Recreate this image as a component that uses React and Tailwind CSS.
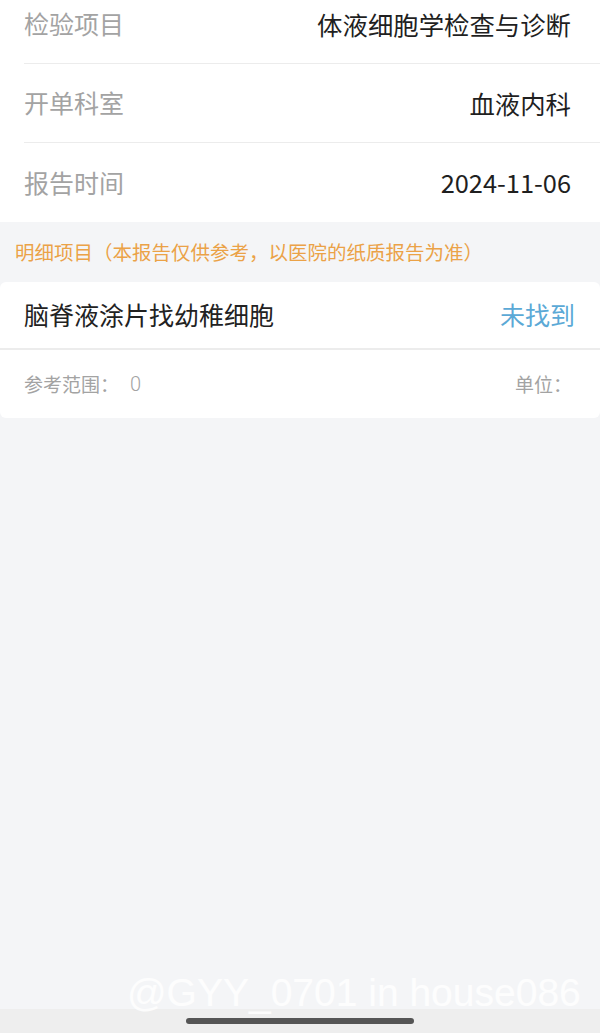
import React from 'react';

const font = { fontFamily: '"Noto Sans CJK SC", "Noto Sans", sans-serif' };

const InfoRow = ({ label, value, last }) => (
  <div className={`flex items-center justify-between h-[79px] ml-6 pr-[29px] ${last ? '' : 'border-b border-[#ececec]'}`}>
    <span className="text-[25px] text-[#a3a3a3]">{label}</span>
    <span className="text-[25.4px] text-[#1f1f1f]">{value}</span>
  </div>
);

const App = () => {
  return (
    <div className="w-[600px] h-[1033px] bg-[#f4f5f7] flex flex-col overflow-hidden relative" style={font}>
      <div className="bg-white mt-[-15px]">
        <InfoRow label="检验项目" value="体液细胞学检查与诊断" />
        <InfoRow label="开单科室" value="血液内科" />
        <InfoRow label="报告时间" value="2024-11-06" last />
      </div>

      <div className="h-[60px] flex items-center px-[15px]">
        <span className="text-[19.5px] text-[#eba247]">明细项目（本报告仅供参考，以医院的纸质报告为准）</span>
      </div>

      <div className="bg-white rounded-[6px]">
        <div className="flex items-center justify-between h-[68px] pl-6 pr-[25px] border-b-2 border-[#ececec]">
          <span className="text-[25px] text-[#222]">脑脊液涂片找幼稚细胞</span>
          <span className="text-[25px] text-[#5ba9d6]">未找到</span>
        </div>
        <div className="flex items-center justify-between h-[68px] pl-6 pr-[28px]">
          <span className="text-[19px] text-[#a3a3a3] flex items-center">
            参考范围：
            <span style={{ fontFamily: '"Roboto", sans-serif' }} className="font-light text-[20px] ml-[11px]">0</span>
          </span>
          <span className="text-[19px] text-[#a3a3a3]">单位：</span>
        </div>
      </div>

      <div className="flex-1" />

      <div className="h-[24px] bg-[#eeeeee] flex items-center justify-center">
        <div className="w-[228px] h-[6px] rounded-full bg-[#555]" />
      </div>

      <div
        className="absolute left-[127px] top-[973px] text-[39px] leading-none text-white/80"
        style={{ fontFamily: '"Liberation Sans", Arial, sans-serif' }}
      >
        @GYY_0701 in house086
      </div>
    </div>
  );
};

export default App;
